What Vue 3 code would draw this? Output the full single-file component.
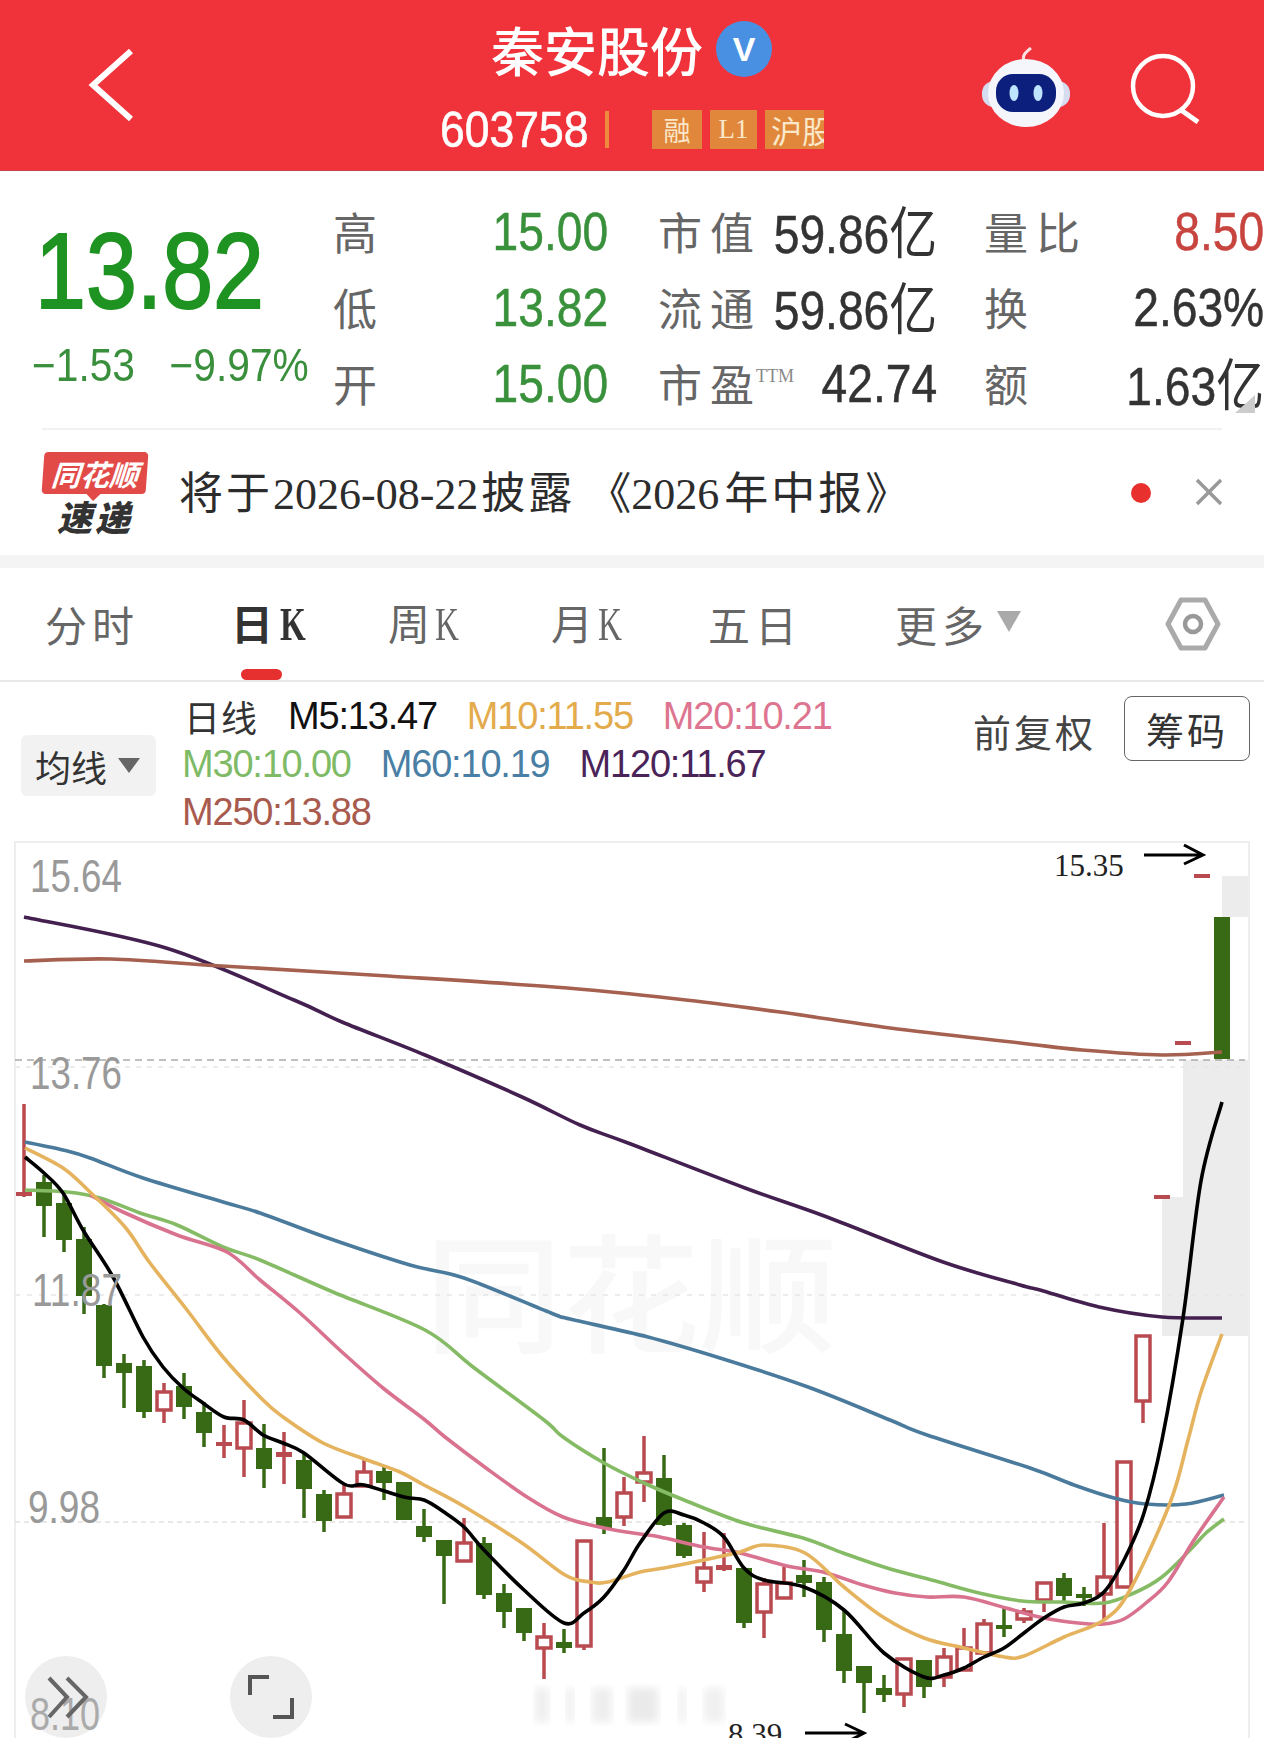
<template>
  <div class="page">
    <!-- top bar -->
    <header class="topbar">
      <svg class="back" viewBox="0 0 50 76" width="50" height="76">
        <path d="M45 4 L7 38 L45 72" fill="none" stroke="#fff" stroke-width="6" />
      </svg>
      <div class="title-block">
        <div class="title-row">
          <span class="title">秦安股份</span>
          <span class="v-badge">V</span>
        </div>
        <div class="code-row">
          <span class="code">603758</span>
          <span class="code-bar"></span>
          <span class="tag">融</span>
          <span class="tag tag-l1">L1</span>
          <span class="tag tag-cut"><span>沪股</span></span>
        </div>
      </div>
      <svg class="robot" viewBox="0 0 90 80" width="90" height="80">
        <path d="M44 16 C40 9 44 6 50 1" fill="none" stroke="#fbe3e3" stroke-width="3" />
        <rect x="1" y="34" width="88" height="26" rx="12" fill="#d5dcf0" />
        <ellipse cx="45" cy="46" rx="38" ry="34" fill="#f4f6fc" />
        <rect x="15" y="27" width="60" height="38" rx="17" fill="#0d1f7c" />
        <ellipse cx="33" cy="46" rx="4.5" ry="8" fill="#bfe4ff" />
        <ellipse cx="57" cy="46" rx="4.5" ry="8" fill="#bfe4ff" />
      </svg>
      <svg class="search" viewBox="0 0 72 72" width="72" height="72">
        <circle cx="34" cy="34" r="30" fill="none" stroke="#fff" stroke-width="4.5" />
        <path d="M52 58 L69 70" fill="none" stroke="#fff" stroke-width="5" />
      </svg>
    </header>

    <!-- quote block -->
    <section class="quote">
      <div class="price">
        <div class="price-now">13.82</div>
        <div class="price-change">
          <span>−1.53</span>
          <span>−9.97%</span>
        </div>
      </div>
      <div class="stats">
        <template v-for="row in stats" :key="row[0].label">
          <div v-for="cell in row" :key="cell.label" class="cell" :class="cell.cls">
            <span class="cell-label">{{ cell.label }}<sup v-if="cell.sup">{{ cell.sup }}</sup></span>
            <span class="cell-value" :class="cell.tone">{{ cell.value }}<i v-if="cell.unit">{{ cell.unit }}</i></span>
          </div>
        </template>
      </div>
      <span class="corner"></span>
    </section>

    <!-- news strip -->
    <section class="news">
      <div class="logo">
        <div class="logo-top">同花顺</div>
        <div class="logo-bottom">速递</div>
      </div>
      <div class="news-text">
        <span class="wide">将于</span>2026-08-22<span class="wide gap-l">披露</span><span class="quote-l">《</span>2026<span class="wide gap-s">年中报</span>》
      </div>
      <span class="news-dot"></span>
      <svg class="news-close" viewBox="0 0 28 28" width="28" height="28">
        <path d="M2 2 L26 26 M26 2 L2 26" stroke="#999" stroke-width="3.5" />
      </svg>
    </section>
    <div class="split"></div>

    <!-- period tabs -->
    <nav class="tabs">
      <span class="tab">分时</span>
      <span class="tab active">日<i class="k">K</i></span>
      <span class="tab">周<i class="k">K</i></span>
      <span class="tab">月<i class="k">K</i></span>
      <span class="tab">五日</span>
      <span class="tab more">更多<b class="more-caret"></b></span>
      <svg class="hex" viewBox="0 0 56 54" width="56" height="54">
        <path d="M3 27 L16 3 H40 L53 27 L40 51 H16 Z" fill="none" stroke="#aaa" stroke-width="5" stroke-linejoin="round" />
        <circle cx="28" cy="27" r="8" fill="none" stroke="#999" stroke-width="4.5" />
      </svg>
      <span class="tab-mark"></span>
    </nav>

    <!-- MA legend -->
    <section class="legend">
      <div class="ma-btn">均线<b class="ma-caret"></b></div>
      <div class="ma-list">
        <div class="ma-row">
          <span class="ma-title">日线</span>
          <span class="c5">M5:13.47</span>
          <span class="c10">M10:11.55</span>
          <span class="c20">M20:10.21</span>
        </div>
        <div class="ma-row">
          <span class="c30">M30:10.00</span>
          <span class="c60">M60:10.19</span>
          <span class="c120">M120:11.67</span>
        </div>
        <div class="ma-row">
          <span class="c250">M250:13.88</span>
        </div>
      </div>
      <div class="adjust">前复权</div>
      <div class="chips">筹码</div>
    </section>

    <!-- chart canvas, drawn in page coordinates -->
    <svg class="chart" viewBox="0 841 1264 897" width="1264" height="897">
      <defs>
        <filter id="soft"><feGaussianBlur stdDeviation="4" /></filter>
      </defs>
      <path d="M15 1738 V842 H1249 V1738" fill="none" stroke="#eee" stroke-width="2" />

      <text x="631" y="1343" class="mark" text-anchor="middle" textLength="412" lengthAdjust="spacingAndGlyphs">同花顺</text>

      <rect x="1222" y="876" width="26" height="41" fill="#ececec" />
      <path d="M1183 1060 H1248 V1336 H1162 V1197 H1183 Z" fill="#ececec" />

      <path d="M15 1060 H1245" stroke="#aaa" stroke-width="1.5" stroke-dasharray="7 5" />
      <path d="M15 1067 H1245" stroke="#e6e6e6" stroke-width="1.5" stroke-dasharray="5 6" />
      <path d="M15 1295 H1245" stroke="#e6e6e6" stroke-width="1.5" stroke-dasharray="5 7" />
      <path d="M15 1522 H1245" stroke="#e4e0e0" stroke-width="1.5" stroke-dasharray="5 4" />

      <g v-for="c in candleItems" :key="c.x">
        <line :x1="c.x" :x2="c.x" :y1="c.wt" :y2="c.wb" :stroke="c.color" stroke-width="3.5" />
        <rect v-if="c.hollow" :x="c.x - 7" :y="c.bt" width="14" :height="c.bb - c.bt" fill="#fff" :stroke="c.color" stroke-width="3.5" />
        <rect v-else :x="c.x - 8" :y="c.bt" width="16" :height="c.bb - c.bt" :fill="c.color" />
      </g>

      <path v-for="l in lineItems" :key="l.color" :d="l.d" :stroke="l.color" fill="none" stroke-width="3.6" stroke-linejoin="round" />

      <text x="30" y="892" class="axis" textLength="92" lengthAdjust="spacingAndGlyphs">15.64</text>
      <text x="30" y="1089" class="axis" textLength="92" lengthAdjust="spacingAndGlyphs">13.76</text>
      <text x="32" y="1306" class="axis" textLength="90" lengthAdjust="spacingAndGlyphs">11.87</text>
      <text x="28" y="1523" class="axis" textLength="72" lengthAdjust="spacingAndGlyphs">9.98</text>

      <rect x="535" y="1688" width="14" height="34" fill="#eee" filter="url(#soft)" />
      <rect x="566" y="1688" width="8" height="34" fill="#eee" filter="url(#soft)" />
      <rect x="592" y="1688" width="20" height="34" fill="#eee" filter="url(#soft)" />
      <rect x="628" y="1688" width="30" height="34" fill="#eaeaea" filter="url(#soft)" />
      <rect x="678" y="1688" width="8" height="34" fill="#f0f0f0" filter="url(#soft)" />
      <rect x="704" y="1688" width="20" height="34" fill="#f0f0f0" filter="url(#soft)" />

      <text x="1054" y="876" class="mark-price">15.35</text>
      <path d="M1144 855 H1203 M1184 845 L1203 855 L1184 864" fill="none" stroke="#000" stroke-width="3" />
      <text x="728" y="1745" class="mark-price">8.39</text>
      <path d="M805 1733 H864 M845 1724 L864 1733 L845 1743" fill="none" stroke="#000" stroke-width="3" />

      <circle cx="66" cy="1697" r="41" fill="#eee" />
      <circle cx="271" cy="1697" r="41" fill="#eee" />
      <text x="30" y="1730" class="axis axis-faint" textLength="70" lengthAdjust="spacingAndGlyphs">8.10</text>
      <path d="M49 1678 L67 1697 L49 1717 M67 1678 L86 1697 L67 1717" fill="none" stroke="#666" stroke-width="4" />
      <path d="M250 1695 V1677 H269 M273 1717 H292 V1698" fill="none" stroke="#555" stroke-width="4" />
    </svg>
  </div>
</template>

<script setup>
const stats = [
  [
    { label: '高', value: '15.00', tone: 'green', cls: 'col-a' },
    { label: '市值', value: '59.86', unit: '亿', cls: 'col-b' },
    { label: '量比', value: '8.50', tone: 'red', cls: 'col-c' }
  ],
  [
    { label: '低', value: '13.82', tone: 'green', cls: 'col-a' },
    { label: '流通', value: '59.86', unit: '亿', cls: 'col-b' },
    { label: '换', value: '2.63%', cls: 'col-c' }
  ],
  [
    { label: '开', value: '15.00', tone: 'green', cls: 'col-a' },
    { label: '市盈', sup: 'TTM', value: '42.74', cls: 'col-b' },
    { label: '额', value: '1.63', unit: '亿', cls: 'col-c' }
  ]
]

// [x, wick top, body top, body bottom, wick bottom, kind]
const candles = [
  [24, 1104, 1192, 1196, 1197, 'r'], [44, 1175, 1182, 1206, 1237, 'g'], [64, 1193, 1203, 1240, 1252, 'g'],
  [84, 1227, 1239, 1296, 1314, 'g'], [104, 1304, 1305, 1366, 1378, 'g'], [124, 1354, 1363, 1373, 1408, 'g'],
  [144, 1360, 1366, 1412, 1418, 'g'], [164, 1383, 1392, 1410, 1423, 'r'], [184, 1373, 1386, 1407, 1419, 'g'],
  [204, 1402, 1412, 1433, 1447, 'g'], [224, 1425, 1442, 1446, 1458, 'r'], [244, 1400, 1423, 1448, 1477, 'r'],
  [264, 1424, 1448, 1469, 1488, 'g'], [284, 1432, 1452, 1457, 1484, 'r'], [304, 1452, 1460, 1489, 1518, 'g'],
  [324, 1490, 1494, 1521, 1532, 'g'], [344, 1485, 1494, 1517, 1517, 'r'], [364, 1460, 1472, 1486, 1486, 'r'],
  [384, 1467, 1471, 1483, 1500, 'g'], [404, 1482, 1482, 1520, 1520, 'g'], [424, 1509, 1526, 1537, 1542, 'g'],
  [444, 1540, 1540, 1556, 1604, 'g'], [464, 1518, 1543, 1561, 1561, 'r'], [484, 1537, 1543, 1595, 1599, 'g'],
  [504, 1584, 1593, 1612, 1628, 'g'], [524, 1608, 1608, 1633, 1641, 'g'], [544, 1623, 1637, 1648, 1679, 'r'],
  [564, 1629, 1642, 1648, 1653, 'g'], [584, 1541, 1541, 1646, 1650, 'r'], [604, 1448, 1517, 1528, 1534, 'g'],
  [624, 1477, 1493, 1517, 1526, 'r'], [644, 1436, 1473, 1482, 1502, 'r'], [664, 1455, 1478, 1525, 1526, 'g'],
  [684, 1523, 1525, 1556, 1558, 'g'], [704, 1532, 1568, 1582, 1592, 'r'], [724, 1533, 1565, 1570, 1571, 'r'],
  [744, 1568, 1568, 1623, 1628, 'g'], [764, 1578, 1584, 1612, 1638, 'r'], [784, 1567, 1583, 1598, 1598, 'r'],
  [804, 1560, 1575, 1583, 1597, 'g'], [824, 1577, 1582, 1630, 1642, 'g'], [844, 1610, 1634, 1671, 1683, 'g'],
  [864, 1666, 1666, 1683, 1713, 'g'], [884, 1675, 1688, 1695, 1702, 'g'], [904, 1658, 1659, 1694, 1707, 'r'],
  [924, 1660, 1660, 1687, 1698, 'g'], [944, 1648, 1657, 1677, 1687, 'r'], [964, 1628, 1648, 1670, 1670, 'r'],
  [984, 1619, 1624, 1653, 1653, 'r'], [1004, 1607, 1625, 1629, 1637, 'g'], [1024, 1608, 1612, 1619, 1623, 'r'],
  [1044, 1583, 1583, 1600, 1612, 'r'], [1064, 1573, 1578, 1596, 1601, 'g'], [1084, 1587, 1594, 1598, 1606, 'g'],
  [1104, 1523, 1577, 1594, 1620, 'r'], [1124, 1462, 1462, 1587, 1587, 'r'], [1143, 1336, 1336, 1401, 1423, 'r'],
  [1162, 1197, 1195, 1199, 1197, 'r'], [1183, 1043, 1041, 1045, 1043, 'r'], [1202, 876, 874, 878, 876, 'r'],
  [1222, 917, 917, 1059, 1059, 'g']
]

const candleItems = candles.map(([x, wt, bt, bb, wb, kind]) => ({
  x, wt, bt, bb, wb,
  color: kind === 'g' ? '#386a16' : '#b94a50',
  hollow: kind === 'r' && bb - bt > 6
}))

const lines = [
  { color: '#43204f', points: '24,917 166,948 294,1000 342,1022 425,1055 522,1097 580,1125 628,1143 745,1188 827,1217 943,1262 1020,1285 1040,1290 1099,1307 1162,1317 1222,1318' },
  { color: '#a5604f', points: '24,961 111,959 222,966 388,976 554,987 677,999 780,1012 890,1028 1020,1043 1082,1050 1162,1055 1222,1052' },
  { color: '#4a7a9c', points: '25,1142 63,1150 90,1158 143,1178 223,1202 260,1213 325,1237 410,1265 464,1278 551,1313 570,1319 648,1337 720,1358 808,1387 890,1420 927,1435 1030,1468 1074,1485 1114,1498 1146,1504 1186,1504 1224,1495' },
  { color: '#86bb66', points: '25,1190 67,1192 100,1198 140,1213 177,1225 223,1247 260,1260 333,1292 425,1330 473,1367 544,1420 563,1437 604,1463 644,1483 684,1500 744,1523 803,1538 843,1553 887,1568 939,1582 979,1593 1022,1601 1062,1602 1104,1603 1134,1593 1162,1577 1190,1550 1206,1533 1224,1519' },
  { color: '#d9728f', points: '90,1195 123,1212 177,1235 227,1252 260,1280 300,1313 342,1352 383,1388 425,1420 445,1437 486,1468 527,1497 563,1517 604,1528 640,1534 660,1537 704,1547 740,1553 787,1566 823,1572 863,1585 895,1593 927,1597 964,1597 1006,1608 1044,1618 1078,1623 1104,1624 1124,1619 1146,1603 1168,1582 1194,1540 1224,1497' },
  { color: '#e5b35e', points: '25,1148 63,1168 90,1192 125,1227 150,1263 187,1310 223,1357 263,1400 283,1417 323,1443 367,1460 400,1472 424,1485 465,1507 522,1543 565,1575 590,1582 608,1582 640,1572 664,1568 704,1560 740,1552 764,1545 805,1553 844,1587 883,1617 924,1638 964,1648 1004,1657 1024,1656 1064,1637 1104,1620 1130,1590 1170,1503 1188,1440 1201,1392 1222,1334' },
  { color: '#000', points: '25,1157 44,1173 63,1193 83,1230 113,1277 143,1337 163,1367 183,1388 203,1403 224,1417 244,1420 263,1435 283,1443 304,1453 344,1484 364,1485 404,1497 424,1500 444,1512 464,1527 484,1550 524,1590 564,1623 584,1613 604,1597 624,1570 640,1543 664,1513 684,1515 704,1523 724,1537 744,1568 764,1580 804,1587 844,1610 884,1653 924,1677 944,1675 964,1668 984,1657 1004,1648 1024,1633 1044,1618 1064,1607 1084,1603 1104,1592 1124,1560 1144,1513 1162,1440 1183,1318 1201,1181 1222,1102' }
]

// catmull-rom through the sampled points so the averages don't look angular
const smooth = (str) => {
  const p = str.split(' ').map((s) => s.split(',').map(Number))
  let d = `M${p[0][0]} ${p[0][1]}`
  for (let i = 0; i < p.length - 1; i++) {
    const a = p[i - 1] || p[i]
    const b = p[i]
    const c = p[i + 1]
    const e = p[i + 2] || c
    const c1 = [b[0] + (c[0] - a[0]) / 6, b[1] + (c[1] - a[1]) / 6]
    const c2 = [c[0] - (e[0] - b[0]) / 6, c[1] - (e[1] - b[1]) / 6]
    d += ` C${c1[0].toFixed(1)} ${c1[1].toFixed(1)} ${c2[0].toFixed(1)} ${c2[1].toFixed(1)} ${c[0]} ${c[1]}`
  }
  return d
}

const lineItems = lines.map((l) => ({ color: l.color, d: smooth(l.points) }))
</script>

<style>
html, body { margin: 0; background: #fff; }
</style>

<style scoped>
.page {
  width: 1264px;
  height: 1738px;
  overflow: hidden;
  position: relative;
  background: #fff;
  font-family: "Noto Sans CJK SC", "Liberation Sans", sans-serif;
}

.topbar {
  height: 171px;
  background: #f0333a;
  border-bottom: 1px solid #c9444a;
  box-sizing: border-box;
  position: relative;
  color: #fff;
}
.back { position: absolute; left: 86px; top: 47px; }
.robot { position: absolute; left: 981px; top: 47px; }
.search { position: absolute; left: 1129px; top: 52px; }
.title-block { margin-left: 440px; }
.title-row { display: flex; align-items: center; height: 98px; padding-left: 51px; gap: 13px; }
.title { font-size: 53px; font-weight: 500; line-height: 1; white-space: nowrap; }
.v-badge {
  width: 56px;
  height: 56px;
  border-radius: 50%;
  background: #4a90e2;
  font: bold 34px "Liberation Sans", sans-serif;
  display: flex;
  align-items: center;
  justify-content: center;
}
.code-row { display: flex; align-items: center; height: 39px; margin-top: 12px; }
.code {
  flex: none;
  width: 149px;
  font: 50px "Liberation Sans", sans-serif;
  transform: scaleX(0.89);
  transform-origin: left;
  -webkit-text-stroke: 0.6px #fff;
}
.code-bar { width: 4px; height: 37px; background: #ef8b3e; margin: 0 43px 0 16px; }
.tag {
  width: 50px;
  height: 39px;
  margin-right: 8px;
  background: #e0873c;
  color: #fbe7c9;
  font-size: 27px;
  display: flex;
  align-items: center;
  justify-content: center;
  overflow: hidden;
  white-space: nowrap;
}
.tag-l1 { width: 47px; font: 27px "Liberation Serif", serif; }
.tag-cut { width: 59px; justify-content: flex-start; margin-right: 0; padding-left: 6px; box-sizing: border-box; font-size: 31px; }

.quote { height: 257px; display: flex; position: relative; }
.price { width: 333px; padding-left: 32px; flex: none; box-sizing: border-box; }
.price-now {
  font: 107px/1 "Liberation Sans", sans-serif;
  color: #1f9322;
  margin: 47px 0 0 3px;
  -webkit-text-stroke: 2px #1f9322;
  transform: scaleX(0.855);
  transform-origin: left;
}
.price-change {
  display: flex;
  gap: 39px;
  font: 46px/1 "Liberation Sans", sans-serif;
  color: #3a8f3c;
  margin-top: 17px;
  white-space: nowrap;
  transform: scaleX(0.885);
  transform-origin: left;
}
.stats {
  display: grid;
  grid-template-columns: 325px 326px 280px;
  grid-auto-rows: 76px;
  margin-top: 22px;
}
.cell { display: flex; justify-content: space-between; align-items: center; white-space: nowrap; }
.col-a { padding-right: 50px; }
.col-b { padding-right: 47px; }
.cell-label { font-size: 44px; color: #666; letter-spacing: 8px; line-height: 1; flex: none; }
.cell-label sup { font: 18px "Liberation Serif", serif; letter-spacing: 0; color: #888; vertical-align: 20px; margin-left: -6px; }
.cell-value {
  flex: none;
  margin-left: -60px;
  font: 54px/1 "Liberation Sans", sans-serif;
  color: #333;
  -webkit-text-stroke: 0.5px currentColor;
  transform: scaleX(0.855);
  transform-origin: right;
}
.cell-value i { font: 56px/1 "Noto Sans CJK SC", sans-serif; -webkit-text-stroke: 0; }
.green { color: #39913b; }
.red { color: #c8443f; }
.corner {
  position: absolute;
  left: 1235px;
  top: 224px;
  width: 0;
  height: 0;
  border-left: 20px solid transparent;
  border-bottom: 18px solid #ccc;
}

.news {
  height: 127px;
  margin: 0 42px;
  border-top: 2px solid #f1f1f1;
  box-sizing: border-box;
  display: flex;
  align-items: center;
  position: relative;
}
.logo { width: 104px; margin-left: 1px; flex: none; margin-top: 4px; }
.logo-top {
  background: #e24a48;
  color: #fff;
  font-size: 29px;
  font-weight: 700;
  font-style: italic;
  line-height: 42px;
  text-align: center;
  border-radius: 4px;
  transform: skewX(-4deg);
  white-space: nowrap;
  position: relative;
}
.logo-top::after {
  content: "";
  position: absolute;
  left: 45px;
  bottom: -7px;
  border: 7px solid transparent;
  border-bottom: 0;
  border-top-color: #e24a48;
}
.logo-bottom {
  text-align: center;
  font-size: 35px;
  font-weight: 900;
  font-style: italic;
  color: #333;
  line-height: 44px;
  letter-spacing: 3px;
}
.news-text {
  margin-left: 32px;
  font-size: 44px;
  color: #2c2c2c;
  font-family: "Liberation Serif", "Noto Sans CJK SC", serif;
  white-space: nowrap;
  line-height: 1;
  margin-top: 4px;
}
.wide { letter-spacing: 3px; }
.gap-l { margin-left: 3px; }
.gap-s { margin-left: 5px; }
.quote-l { margin-left: 12px; }
.news-dot {
  position: absolute;
  left: 1089px;
  top: 53px;
  width: 20px;
  height: 20px;
  border-radius: 50%;
  background: #e8302f;
}
.news-close { position: absolute; left: 1153px; top: 48px; }
.split { height: 13px; background: #f4f4f4; }

.tabs {
  height: 114px;
  border-bottom: 2px solid #e8e8e8;
  box-sizing: border-box;
  display: grid;
  grid-template-columns: 190px 153px 163px 157px 187px 270px 56px;
  padding-left: 45px;
  padding-bottom: 0;
  align-items: center;
  position: relative;
  color: #666;
}
.tab { font-size: 42px; letter-spacing: 5px; line-height: 1; white-space: nowrap; }
.tab.active { color: #333; font-weight: 700; margin-left: -4px; }
.k {
  font: 46px/1 "Liberation Serif", serif;
  display: inline-block;
  transform: scaleX(0.72);
  transform-origin: left;
}
.active .k { margin-left: 2px; font-weight: 700; }
.more { display: flex; align-items: center; }
.more-caret {
  margin: 0 0 6px 8px;
  border: 12px solid transparent;
  border-bottom: 0;
  border-top: 21px solid #aaa;
}
.tab-mark {
  position: absolute;
  left: 241px;
  bottom: 0;
  width: 41px;
  height: 11px;
  border-radius: 6px;
  background: #e5302f;
}

.legend { height: 159px; display: flex; position: relative; }
.ma-btn {
  position: absolute;
  left: 21px;
  top: 53px;
  width: 135px;
  height: 61px;
  border-radius: 6px;
  background: #f2f2f2;
  font-size: 36px;
  color: #333;
  display: flex;
  align-items: center;
  padding-left: 14px;
  box-sizing: border-box;
}
.ma-caret {
  margin-left: 11px;
  border: 11px solid transparent;
  border-bottom: 0;
  border-top: 15px solid #666;
}
.ma-list {
  margin-left: 182px;
  padding-top: 10px;
  font: 38px/48px "Liberation Sans", sans-serif;
  letter-spacing: -1.2px;
}
.ma-row { display: flex; gap: 30px; height: 48px; white-space: nowrap; }
.ma-title { font: 36px/48px "Noto Sans CJK SC", sans-serif; color: #333; letter-spacing: 1px; margin-left: 2px; }
.c5 { color: #111; }
.c10 { color: #e3ab4c; }
.c20 { color: #de7590; }
.c30 { color: #7fbb66; }
.c60 { color: #4a7fa5; }
.c120 { color: #4a2458; }
.c250 { color: #a95a4e; }
.adjust {
  position: absolute;
  left: 973px;
  top: 24px;
  font-size: 38px;
  letter-spacing: 3px;
  color: #444;
  line-height: 50px;
}
.chips {
  position: absolute;
  left: 1124px;
  top: 14px;
  width: 126px;
  height: 65px;
  border: 1px solid #666;
  border-radius: 8px;
  box-sizing: border-box;
  font-size: 38px;
  letter-spacing: 3px;
  color: #333;
  display: flex;
  align-items: center;
  justify-content: center;
}

.chart { display: block; }
.axis { font: 46px "Liberation Sans", sans-serif; fill: #999; }
.axis-faint { fill: #aaa; }
.mark-price { font: 31px "Liberation Serif", serif; fill: #222; }
.mark { font-size: 128px; font-weight: 500; fill: #f8f8f8; }
</style>
